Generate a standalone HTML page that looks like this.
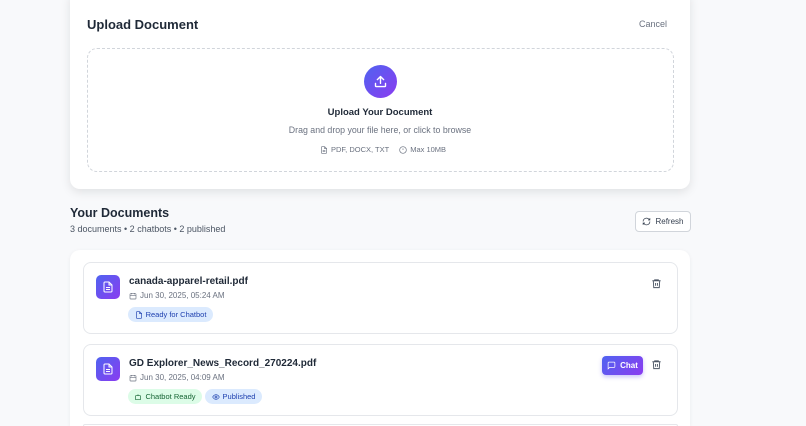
<!DOCTYPE html>
<html><head><style>
*{box-sizing:border-box;margin:0;padding:0}
html,body{width:806px;height:426px;overflow:hidden}
body{background:#f8f9fb;font-family:"Liberation Sans",sans-serif;color:#111827;position:relative}
.abs{position:absolute}
.card{background:#fff;border-radius:10px}
.grad{background:linear-gradient(135deg,#4f63f0,#8b3cf0)}
.item{position:absolute;left:83px;width:595px;height:72px;border:1px solid #e5e7eb;border-radius:8px;background:#fff}
.ic{position:absolute;left:12px;top:12px;width:24px;height:24px;border-radius:5px;display:flex;align-items:center;justify-content:center}
.t{position:absolute;left:45px;top:13px;font-size:10px;font-weight:bold;color:#1f2937;white-space:nowrap}
.d{position:absolute;left:45px;top:28px;font-size:8px;color:#6b7280;display:flex;align-items:center;gap:3px;white-space:nowrap}
.b{position:absolute;top:44px;height:15px;border-radius:8px;font-size:7.5px;display:flex;align-items:center;justify-content:center;gap:3px;white-space:nowrap}
.trash{position:absolute;left:567px;top:15px}
</style></head><body>
<div class="abs card" style="left:70px;top:-10px;width:620px;height:199px;box-shadow:0 3px 10px rgba(0,0,0,.1)"></div>
<div class="abs" style="left:87px;top:17px;font-size:13px;font-weight:bold;color:#1f2937">Upload Document</div>
<div class="abs" style="left:639px;top:19px;font-size:9px;color:#6b7280">Cancel</div>
<div class="abs" style="left:87px;top:48px;width:587px;height:124px;border:1px dashed #d1d5db;border-radius:10px"></div>
<div class="abs grad" style="left:364px;top:65px;width:33px;height:33px;border-radius:50%;display:flex;align-items:center;justify-content:center">
<svg width="15" height="15" viewBox="0 0 24 24" fill="none" stroke="#fff" stroke-width="2.2" stroke-linecap="round" stroke-linejoin="round"><path d="M12 15V4M7 9l5-5 5 5M4 15v4a1 1 0 001 1h14a1 1 0 001-1v-4"/></svg></div>
<div class="abs" style="left:0;width:760px;top:107px;text-align:center;font-size:9.5px;font-weight:bold;color:#1f2937">Upload Your Document</div>
<div class="abs" style="left:0;width:760px;top:125px;text-align:center;font-size:8.8px;color:#6b7280">Drag and drop your file here, or click to browse</div>
<div class="abs" style="left:320px;top:145px;font-size:7.5px;color:#6b7280;display:flex;align-items:center;gap:3px">
<svg width="8" height="8" viewBox="0 0 24 24" fill="none" stroke="#6b7280" stroke-width="2"><path d="M14 2H6a2 2 0 00-2 2v16a2 2 0 002 2h12a2 2 0 002-2V8zM14 2v6h6M8 13h8M8 17h8"/></svg>PDF, DOCX, TXT
<svg style="margin-left:7px" width="8" height="8" viewBox="0 0 24 24" fill="none" stroke="#6b7280" stroke-width="2"><circle cx="12" cy="12" r="10"/><path d="M12 7v5"/></svg>Max 10MB</div>

<div class="abs" style="left:70px;top:206px;font-size:12.5px;font-weight:bold;color:#1f2937">Your Documents</div>
<div class="abs" style="left:70px;top:224px;font-size:9px;color:#4b5563">3 documents • 2 chatbots • 2 published</div>
<div class="abs" style="left:635px;top:211px;width:56px;height:21px;border:1px solid #d1d5db;border-radius:4px;background:#fff;font-size:8px;color:#374151;display:flex;align-items:center;justify-content:center;gap:4px">
<svg width="9" height="9" viewBox="0 0 24 24" fill="none" stroke="#374151" stroke-width="2"><path d="M3 12a9 9 0 0115-6.7L21 8M21 3v5h-5M21 12a9 9 0 01-15 6.7L3 16M3 21v-5h5"/></svg>Refresh</div>

<div class="abs" style="left:70px;top:250px;width:620px;height:176px;background:#fff;border-radius:10px 10px 0 0;box-shadow:0 1px 4px rgba(0,0,0,.06)"></div>

<div class="item" style="top:262px">
<div class="ic grad"><svg width="12" height="12" viewBox="0 0 24 24" fill="none" stroke="#fff" stroke-width="2"><path d="M14 2H6a2 2 0 00-2 2v16a2 2 0 002 2h12a2 2 0 002-2V8zM14 2v6h6M8 13h8M8 17h8"/></svg></div>
<div class="t">canada-apparel-retail.pdf</div>
<div class="d"><svg width="8" height="8" viewBox="0 0 24 24" fill="none" stroke="#6b7280" stroke-width="2"><rect x="3" y="5" width="18" height="16" rx="2"/><path d="M3 10h18M8 3v4M16 3v4"/></svg>Jun 30, 2025, 05:24 AM</div>
<div class="b" style="left:44px;width:85px;background:#dbeafe;color:#1e40af"><svg width="8" height="8" viewBox="0 0 24 24" fill="none" stroke="#1e40af" stroke-width="2"><path d="M14 2H6a2 2 0 00-2 2v16a2 2 0 002 2h12a2 2 0 002-2V8zM14 2v6h6"/></svg>Ready for Chatbot</div>
<svg class="trash" width="11" height="11" viewBox="0 0 24 24" fill="none" stroke="#4b5563" stroke-width="2"><path d="M3 6h18M8 6V4h8v2M5 6l1 15h12l1-15M10 11v6M14 11v6"/></svg>
</div>

<div class="item" style="top:344px">
<div class="ic grad"><svg width="12" height="12" viewBox="0 0 24 24" fill="none" stroke="#fff" stroke-width="2"><path d="M14 2H6a2 2 0 00-2 2v16a2 2 0 002 2h12a2 2 0 002-2V8zM14 2v6h6M8 13h8M8 17h8"/></svg></div>
<div class="t">GD Explorer_News_Record_270224.pdf</div>
<div class="d"><svg width="8" height="8" viewBox="0 0 24 24" fill="none" stroke="#6b7280" stroke-width="2"><rect x="3" y="5" width="18" height="16" rx="2"/><path d="M3 10h18M8 3v4M16 3v4"/></svg>Jun 30, 2025, 04:09 AM</div>
<div class="b" style="left:44px;width:74px;background:#dcfce7;color:#166534"><svg width="8" height="8" viewBox="0 0 24 24" fill="none" stroke="#166534" stroke-width="2"><rect x="4" y="8" width="16" height="12" rx="2"/><path d="M12 4v4"/></svg>Chatbot Ready</div>
<div class="b" style="left:121px;width:57px;background:#dbeafe;color:#1e40af"><svg width="8" height="8" viewBox="0 0 24 24" fill="none" stroke="#1e40af" stroke-width="2"><path d="M2 12s4-7 10-7 10 7 10 7-4 7-10 7S2 12 2 12z"/><circle cx="12" cy="12" r="3"/></svg>Published</div>
<div class="abs grad" style="left:518px;top:11px;width:41px;height:19px;border-radius:4px;color:#fff;font-size:8px;font-weight:bold;display:flex;align-items:center;justify-content:center;gap:4px;box-shadow:0 2px 4px rgba(80,60,240,.3)"><svg width="9" height="9" viewBox="0 0 24 24" fill="none" stroke="#fff" stroke-width="2"><path d="M21 15a2 2 0 01-2 2H7l-4 4V5a2 2 0 012-2h14a2 2 0 012 2z"/></svg>Chat</div>
<svg class="trash" style="top:14px" width="11" height="11" viewBox="0 0 24 24" fill="none" stroke="#4b5563" stroke-width="2"><path d="M3 6h18M8 6V4h8v2M5 6l1 15h12l1-15M10 11v6M14 11v6"/></svg>
</div>

<div class="abs" style="left:83px;top:424px;width:595px;height:2px;border:1px solid #e5e7eb;border-bottom:none;border-radius:6px 6px 0 0"></div>
</body></html>
